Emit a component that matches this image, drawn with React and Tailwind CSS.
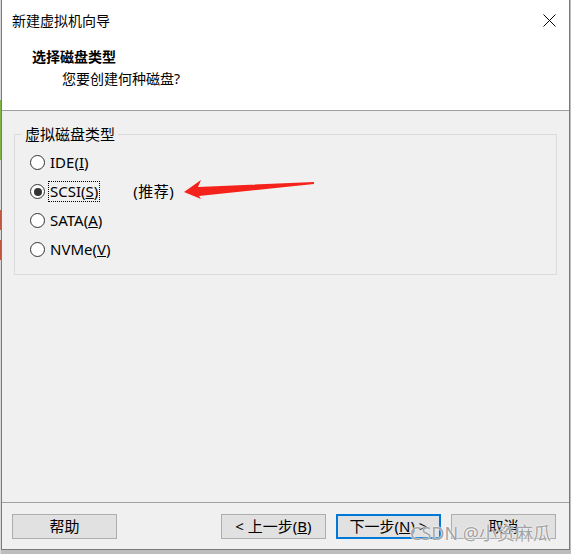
import React from "react";

const FONT = { fontFamily: '"Noto Sans", "Noto Sans CJK SC", sans-serif' };

function Radio({ checked, children, focus }) {
  return (
    <div className="flex h-[29px] items-center">
      <span className="ml-[15px] flex h-[15px] w-[15px] items-center justify-center rounded-full border border-[#333] bg-white">
        {checked && <span className="h-[8px] w-[8px] rounded-full bg-[#333]" />}
      </span>
      <span
        className={
          "ml-[4px] px-[1px] leading-[19px] text-[15px] text-black " +
          (focus ? "outline outline-1 outline-dotted outline-black" : "")
        }
      >
        {children}
      </span>
    </div>
  );
}

function Btn({ children, primary }) {
  return (
    <button
      className={
        "flex h-[25px] w-[105px] items-center justify-center bg-[#e1e1e1] text-[15px] text-black " +
        (primary ? "border-2 border-[#0078d7]" : "border border-[#adadad]")
      }
    >
      {children}
    </button>
  );
}

export default function App() {
  return (
    <div className="flex h-[554px] w-[571px] bg-[#bdbdbd]" style={FONT}>
      {/* background apps peeking at the left */}
      <div className="flex w-px flex-col bg-[#d8d8d8]">
        <div className="mt-[100px] h-[60px] bg-[#7cb342]" />
        <div className="mt-[50px] h-[20px] bg-[#c0573e]" />
        <div className="mt-[10px] h-[20px] bg-[#c0573e]" />
      </div>

      <div className="relative flex h-[550px] w-[569px] flex-col border-x border-b border-[#7a7a7a] bg-[#f0f0f0]">
        {/* title + header */}
        <div className="flex h-[111px] flex-col border-b border-[#a0a0a0] bg-white">
          <div className="flex h-[40px] items-center justify-between pl-[10px] pr-[13px]">
            <span className="text-[14px] text-black">新建虚拟机向导</span>
            <svg width="13" height="13" viewBox="0 0 13 13">
              <path d="M0.5 0.5 L12.5 12.5 M12.5 0.5 L0.5 12.5" stroke="#000" strokeWidth="1" />
            </svg>
          </div>
          <div className="pl-[30px] pt-[6px] text-[14px] font-bold leading-[22px] text-black">选择磁盘类型</div>
          <div className="pl-[60px] text-[14px] leading-[22px] text-black">您要创建何种磁盘?</div>
        </div>

        {/* body */}
        <div className="relative flex-1">
          <fieldset className="mx-[12px] mt-[14px] h-[150px] border border-[#dcdcdc] pt-[4px]">
            <legend className="ml-[7px] px-[3px] text-[15px] leading-[19px] text-black">虚拟磁盘类型</legend>
            <Radio>
              IDE(<span className="underline">I</span>)
            </Radio>
            <div className="flex items-center">
              <Radio checked focus>
                SCSI(<span className="underline">S</span>)
              </Radio>
              <span className="ml-[34px] text-[15px] tracking-[0.5px] text-black">(推荐)</span>
            </div>
            <Radio>
              SATA(<span className="underline">A</span>)
            </Radio>
            <Radio>
              NVMe(<span className="underline">V</span>)
            </Radio>
          </fieldset>

          {/* red annotation arrow */}
          <svg className="absolute left-0 top-0" width="567" height="200">
            <polygon
              points="182,81 199,69 196,76 312,71 312,73 197,85 199,88"
              fill="#f5221b"
            />
          </svg>
        </div>

        {/* footer */}
        <div className="flex h-[47px] items-start border-t border-[#a0a0a0] pt-[11px]">
          <div className="ml-[10px]">
            <Btn>帮助</Btn>
          </div>
          <div className="ml-[104px] flex gap-[10px]">
            <Btn>
              &lt; 上一步(<span className="underline">B</span>)
            </Btn>
            <Btn primary>
              下一步(<span className="underline">N</span>) &gt;
            </Btn>
            <Btn>取消</Btn>
          </div>
        </div>

        {/* watermark */}
        <span
          className="pointer-events-none absolute left-[408px] top-[520px] whitespace-nowrap text-[18px] text-[#a3a3a3]"
          style={{ textShadow: "0 0 2px #fff, 0 0 1px #fff" }}
        >
          CSDN @小资麻瓜
        </span>
      </div>
    </div>
  );
}
